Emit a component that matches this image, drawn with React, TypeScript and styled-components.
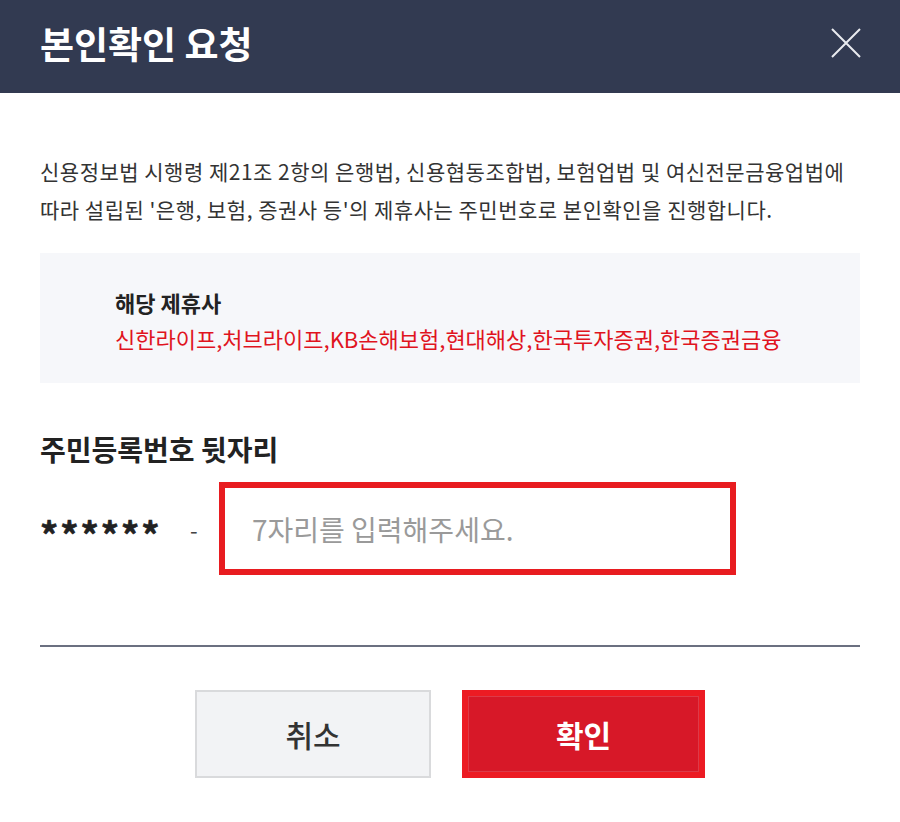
import React from 'react'
import styled, { createGlobalStyle } from 'styled-components'

const GlobalStyle = createGlobalStyle`
  html, body {
    margin: 0;
    padding: 0;
    background: #fff;
  }
  body {
    font-family: "Noto Sans CJK KR", "Noto Sans", sans-serif;
    color: #222;
  }
  * {
    box-sizing: border-box;
  }
`

const Modal = styled.section`
  width: 900px;
  height: 822px;
  background: #fff;
`

const Header = styled.header`
  height: 93px;
  background: #323a51;
  display: flex;
  align-items: center;
  justify-content: space-between;
  padding: 0 38px 8px 40px;
  h2 {
    margin: 0;
    font-size: 37px;
    font-weight: 700;
    color: #fff;
  }
`

const CloseButton = styled.button`
  width: 32px;
  height: 32px;
  padding: 0;
  border: 0;
  background: none;
  display: flex;
  align-items: center;
  justify-content: center;
  cursor: pointer;
`

const Body = styled.div`
  padding: 0 40px;
`

const Description = styled.p`
  margin: 59px 0 0;
  font-size: 21px;
  line-height: 38px;
  color: #333;
  letter-spacing: 0.5px;
`

const PartnerBox = styled.div`
  margin-top: 25px;
  height: 130px;
  background: #f6f7fa;
  padding: 31px 0 0 75px;
  strong {
    display: block;
    font-size: 22px;
    font-weight: 700;
    line-height: 36px;
    color: #222;
  }
  span {
    display: block;
    font-size: 22px;
    line-height: 36px;
    color: #e0141e;
  }
`

const FieldLabel = styled.h3`
  margin: 46px 0 0;
  font-size: 28px;
  font-weight: 700;
  line-height: 40px;
  color: #222;
`

const FieldRow = styled.div`
  margin-top: 13px;
  display: flex;
  align-items: center;
`

const Masked = styled.span`
  width: 150px;
  padding-top: 9px;
  font-size: 36px;
  font-weight: 700;
  line-height: 40px;
  color: #222;
  letter-spacing: 2px;
  -webkit-text-stroke: 0.6px #222;
`

const Dash = styled.span`
  width: 29px;
  font-size: 22px;
  color: #444;
`

const NumberInput = styled.input`
  width: 517px;
  height: 93px;
  border: 6px solid #e81c20;
  padding: 0 0 0 27px;
  font-family: inherit;
  font-size: 28px;
  color: #222;
  outline: none;
  &::placeholder {
    color: #9a9a9a;
  }
`

const Divider = styled.hr`
  margin: 70px 0 0;
  border: 0;
  height: 2px;
  background: #6b7080;
`

const Actions = styled.div`
  margin-top: 43px;
  display: flex;
  justify-content: center;
  gap: 31px;
`

const ActionButton = styled.button<{ $primary?: boolean }>`
  width: ${p => (p.$primary ? '243px' : '236px')};
  height: 88px;
  font-family: inherit;
  font-size: 30px;
  font-weight: ${p => (p.$primary ? 700 : 500)};
  color: ${p => (p.$primary ? '#fff' : '#333')};
  background: ${p => (p.$primary ? '#d71828' : '#f2f3f5')};
  border: ${p => (p.$primary ? '6px solid #ec1b23' : '2px solid #d9dadc')};
  box-shadow: ${p => (p.$primary ? 'inset 0 0 0 1px rgba(255,255,255,0.15)' : 'none')};
  cursor: pointer;
`

export default function App() {
  return (
    <Modal>
      <GlobalStyle />
      <Header>
        <h2>본인확인 요청</h2>
        <CloseButton aria-label="닫기">
          <svg width="30" height="30" viewBox="0 0 30 30">
            <path d="M1 1 L29 29 M29 1 L1 29" stroke="#e9ebef" strokeWidth="2" fill="none" />
          </svg>
        </CloseButton>
      </Header>
      <Body>
        <Description>
          신용정보법 시행령 제21조 2항의 은행법, 신용협동조합법, 보험업법 및 여신전문금융업법에
          <br />
          따라 설립된 '은행, 보험, 증권사 등'의 제휴사는 주민번호로 본인확인을 진행합니다.
        </Description>
        <PartnerBox>
          <strong>해당 제휴사</strong>
          <span>신한라이프,처브라이프,KB손해보험,현대해상,한국투자증권,한국증권금융</span>
        </PartnerBox>
        <FieldLabel>주민등록번호 뒷자리</FieldLabel>
        <FieldRow>
          <Masked>******</Masked>
          <Dash>-</Dash>
          <NumberInput type="password" placeholder="7자리를 입력해주세요." />
        </FieldRow>
        <Divider />
      </Body>
      <Actions>
        <ActionButton>취소</ActionButton>
        <ActionButton $primary>확인</ActionButton>
      </Actions>
    </Modal>
  )
}
